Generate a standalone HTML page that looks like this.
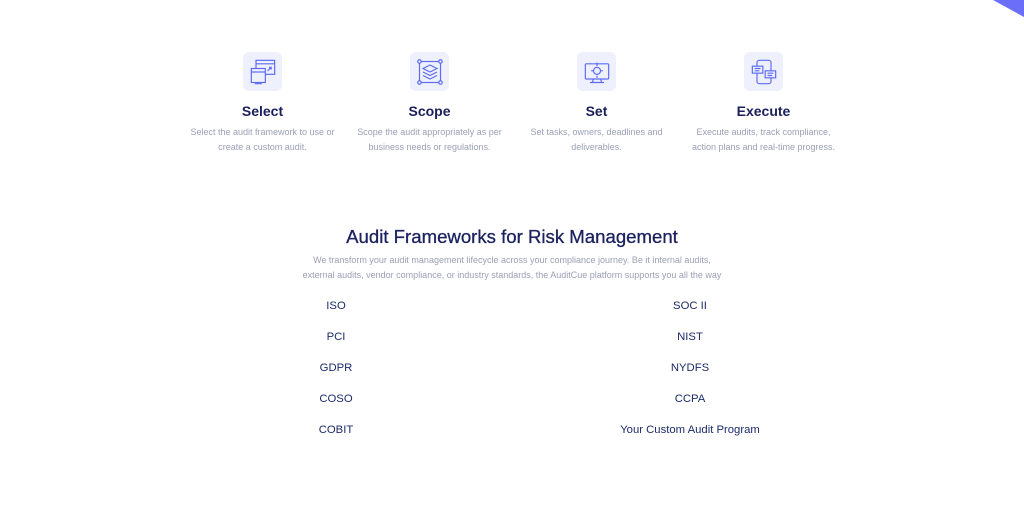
<!DOCTYPE html>
<html><head><style>
*{margin:0;padding:0;box-sizing:border-box}
body{width:1024px;height:512px;background:#fff;font-family:"Liberation Sans",sans-serif;position:relative;overflow:hidden}
.corner{position:absolute;right:0;top:0}
.col{position:absolute;top:52px;width:167px;text-align:center}
.ib{width:39px;height:39px;margin:0 auto;background:#eef0fe;border-radius:6px;display:flex;align-items:center;justify-content:center}
.col h3{font-size:14px;color:#1a1f5c;margin-top:12px;font-weight:bold;line-height:17px}
.col p{font-size:9px;color:#9a9fb5;line-height:15px;margin-top:5px}
h2{position:absolute;top:226px;left:0;width:1024px;text-align:center;font-size:18.6px;font-weight:normal;color:#1c2260;-webkit-text-stroke:0.3px #1c2260}
.sub{position:absolute;top:253px;left:0;width:1024px;text-align:center;font-size:9px;line-height:15px;color:#9a9fb5}
.it{position:absolute;font-size:11.3px;color:#1c2b6b;width:300px;text-align:center;line-height:14px}
</style></head><body>
<svg class="corner" width="40" height="20"><polygon points="9,0 40,0 40,17" fill="#6b6ef9"/></svg>

<div class="col" style="left:179px"><div class="ib"><svg width="28" height="28" viewBox="0 0 24 24" fill="none" stroke="#5b6bf5" stroke-width="1"><rect x="6" y="2" width="16" height="12"/><line x1="6" y1="5" x2="22" y2="5"/><rect x="2" y="9" width="12" height="12" fill="#eef0fe"/><line x1="2" y1="12" x2="14" y2="12"/><path d="M16 11l3-3M17 8h2v2"/><path d="M5 22h6"/></svg></div><h3>Select</h3><p>Select the audit framework to use or<br>create a custom audit.</p></div>

<div class="col" style="left:346px"><div class="ib"><svg width="28" height="28" viewBox="0 0 24 24" fill="none" stroke="#5b6bf5" stroke-width="1"><rect x="3" y="3" width="18" height="18"/><circle cx="3" cy="3" r="1.5" fill="#eef0fe"/><circle cx="21" cy="3" r="1.5" fill="#eef0fe"/><circle cx="3" cy="21" r="1.5" fill="#eef0fe"/><circle cx="21" cy="21" r="1.5" fill="#eef0fe"/><path d="M12 6l6 3-6 3-6-3z M6 12l6 3 6-3 M6 15l6 3 6-3"/></svg></div><h3>Scope</h3><p>Scope the audit appropriately as per<br>business needs or regulations.</p></div>

<div class="col" style="left:513px"><div class="ib"><svg width="28" height="28" viewBox="0 0 24 24" fill="none" stroke="#5b6bf5" stroke-width="1"><rect x="2" y="5" width="20" height="13" rx="1"/><path d="M9 18l-1 3h8l-1-3M6 21h12"/><circle cx="12" cy="11" r="3"/><path d="M12 4v3M12 15v2M7 11h2M15 11h2"/></svg></div><h3>Set</h3><p>Set tasks, owners, deadlines and<br>deliverables.</p></div>

<div class="col" style="left:680px"><div class="ib"><svg width="28" height="28" viewBox="0 0 24 24" fill="none" stroke="#5b6bf5" stroke-width="1"><rect x="6" y="2" width="12" height="20" rx="2"/><rect x="2" y="7" width="9" height="6" fill="#eef0fe"/><rect x="13" y="11" width="9" height="6" fill="#eef0fe"/><path d="M4 9h5M4 11h4M15 13h5M15 15h4"/></svg></div><h3>Execute</h3><p>Execute audits, track compliance,<br>action plans and real-time progress.</p></div>

<h2>Audit Frameworks for Risk Management</h2>
<div class="sub">We transform your audit management lifecycle across your compliance journey. Be it internal audits,<br>external audits, vendor compliance, or industry standards, the AuditCue platform supports you all the way</div>

<div class="it" style="left:186px;top:299px">ISO</div><div class="it" style="left:540px;top:299px">SOC II</div>
<div class="it" style="left:186px;top:330px">PCI</div><div class="it" style="left:540px;top:330px">NIST</div>
<div class="it" style="left:186px;top:361px">GDPR</div><div class="it" style="left:540px;top:361px">NYDFS</div>
<div class="it" style="left:186px;top:392px">COSO</div><div class="it" style="left:540px;top:392px">CCPA</div>
<div class="it" style="left:186px;top:423px">COBIT</div><div class="it" style="left:540px;top:423px">Your Custom Audit Program</div>
</body></html>
